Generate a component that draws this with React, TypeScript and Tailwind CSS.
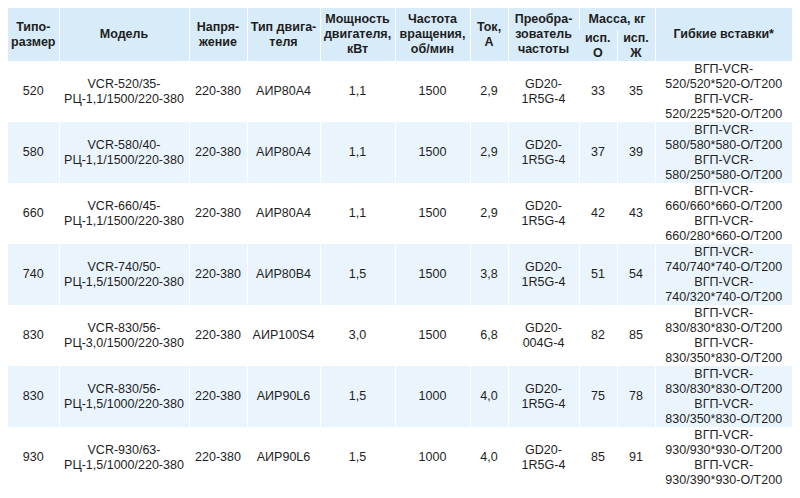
const ROWS = [
  { size: "520", model: ["VCR-520/35-", "РЦ-1,1/1500/220-380"], motor: "АИР80А4", power: "1,1", rpm: "1500", amp: "2,9", inv: ["GD20-", "1R5G-4"], mo: "33", mz: "35", ins: ["ВГП-VCR-", "520/520*520-O/T200", "ВГП-VCR-", "520/225*520-O/T200"] },
  { size: "580", model: ["VCR-580/40-", "РЦ-1,1/1500/220-380"], motor: "АИР80А4", power: "1,1", rpm: "1500", amp: "2,9", inv: ["GD20-", "1R5G-4"], mo: "37", mz: "39", ins: ["ВГП-VCR-", "580/580*580-O/T200", "ВГП-VCR-", "580/250*580-O/T200"] },
  { size: "660", model: ["VCR-660/45-", "РЦ-1,1/1500/220-380"], motor: "АИР80А4", power: "1,1", rpm: "1500", amp: "2,9", inv: ["GD20-", "1R5G-4"], mo: "42", mz: "43", ins: ["ВГП-VCR-", "660/660*660-O/T200", "ВГП-VCR-", "660/280*660-O/T200"] },
  { size: "740", model: ["VCR-740/50-", "РЦ-1,5/1500/220-380"], motor: "АИР80В4", power: "1,5", rpm: "1500", amp: "3,8", inv: ["GD20-", "1R5G-4"], mo: "51", mz: "54", ins: ["ВГП-VCR-", "740/740*740-O/T200", "ВГП-VCR-", "740/320*740-O/T200"] },
  { size: "830", model: ["VCR-830/56-", "РЦ-3,0/1500/220-380"], motor: "АИР100S4", power: "3,0", rpm: "1500", amp: "6,8", inv: ["GD20-", "004G-4"], mo: "82", mz: "85", ins: ["ВГП-VCR-", "830/830*830-O/T200", "ВГП-VCR-", "830/350*830-O/T200"] },
  { size: "830", model: ["VCR-830/56-", "РЦ-1,5/1000/220-380"], motor: "АИР90L6", power: "1,5", rpm: "1000", amp: "4,0", inv: ["GD20-", "1R5G-4"], mo: "75", mz: "78", ins: ["ВГП-VCR-", "830/830*830-O/T200", "ВГП-VCR-", "830/350*830-O/T200"] },
  { size: "930", model: ["VCR-930/63-", "РЦ-1,5/1000/220-380"], motor: "АИР90L6", power: "1,5", rpm: "1000", amp: "4,0", inv: ["GD20-", "1R5G-4"], mo: "85", mz: "91", ins: ["ВГП-VCR-", "930/930*930-O/T200", "ВГП-VCR-", "930/390*930-O/T200"] },
];

const WIDTHS = [51, 130, 58, 73, 75, 75, 38, 71, 38, 38, 137];

function Lines({ items }: { items: string[] }) {
  return (
    <>
      {items.map((t, i) => (
        <span key={i} className="block whitespace-nowrap">
          {t}
        </span>
      ))}
    </>
  );
}

export default function App() {
  const th = "border-l border-white first:border-l-0 px-0.5 text-center align-middle font-bold";
  const td = "border-l border-white first:border-l-0 px-0.5 text-center align-middle";

  return (
    <div
      className="w-[800px] h-[498px] bg-white p-2 text-[12.5px] leading-[15px] text-[#1e1e1e]"
      style={{ fontFamily: '"Liberation Sans", Arial, sans-serif' }}
    >
      <table className="table-fixed border-collapse w-[784px]">
        <colgroup>
          {WIDTHS.map((w, i) => (
            <col key={i} style={{ width: w }} />
          ))}
        </colgroup>
        <thead className="bg-[#d7ebf8]">
          <tr className="h-[22px]">
            <th rowSpan={2} className={th}><Lines items={["Типо-", "размер"]} /></th>
            <th rowSpan={2} className={th}>Модель</th>
            <th rowSpan={2} className={th}><Lines items={["Напря-", "жение"]} /></th>
            <th rowSpan={2} className={th}><Lines items={["Тип двига-", "теля"]} /></th>
            <th rowSpan={2} className={th}><Lines items={["Мощность", "двигателя,", "кВт"]} /></th>
            <th rowSpan={2} className={th}><Lines items={["Частота", "вращения,", "об/мин"]} /></th>
            <th rowSpan={2} className={th}><Lines items={["Ток,", "А"]} /></th>
            <th rowSpan={2} className={th}><Lines items={["Преобра-", "зователь", "частоты"]} /></th>
            <th colSpan={2} className={`${th} align-bottom`}>Масса, кг</th>
            <th rowSpan={2} className={th}>Гибкие вставки*</th>
          </tr>
          <tr className="h-[31px]">
            <th className={th}><Lines items={["исп.", "О"]} /></th>
            <th className={th}><Lines items={["исп.", "Ж"]} /></th>
          </tr>
        </thead>
        <tbody>
          {ROWS.map((r, i) => (
            <tr key={i} className={`h-[61px] ${i % 2 === 1 ? "bg-[#eaf4fc]" : "bg-white"}`}>
              <td className={td}>{r.size}</td>
              <td className={td}><Lines items={r.model} /></td>
              <td className={td}>220-380</td>
              <td className={td}>{r.motor}</td>
              <td className={td}>{r.power}</td>
              <td className={td}>{r.rpm}</td>
              <td className={td}>{r.amp}</td>
              <td className={td}><Lines items={r.inv} /></td>
              <td className={td}>{r.mo}</td>
              <td className={td}>{r.mz}</td>
              <td className={td}><Lines items={r.ins} /></td>
            </tr>
          ))}
        </tbody>
      </table>
    </div>
  );
}
